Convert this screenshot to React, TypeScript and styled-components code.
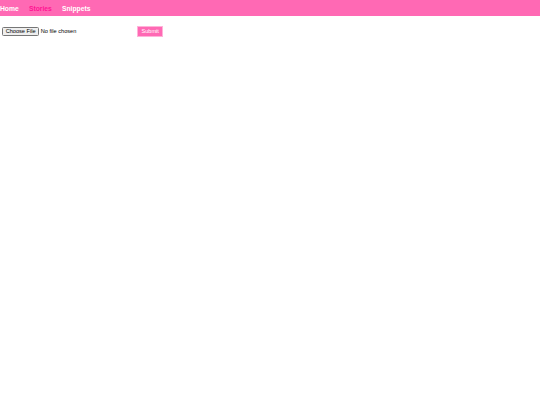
import styled, { createGlobalStyle } from "styled-components";

const GlobalStyle = createGlobalStyle`
  html, body {
    margin: 0;
    padding: 0;
    background: #fff;
    font-family: "Liberation Sans", Arial, sans-serif;
  }
`;

// the screenshot is a 1280px wide layout shown at 540px
const Page = styled.div`
  zoom: 0.421875;
`;

const NavBar = styled.nav`
  height: 38px;
  background-color: #ff69b4;
  display: flex;
  align-items: center;
`;

const NavLink = styled.a<{ $active?: boolean }>`
  font-size: 16px;
  font-weight: bold;
  text-decoration: none;
  margin-right: 24px;
  color: ${(p) => (p.$active ? "#ff1493" : "#ffffff")};
  cursor: pointer;
`;

const UploadForm = styled.form`
  display: flex;
  align-items: center;
  padding: 24px 5px 0;
`;

const FileInput = styled.input`
  font-family: "Liberation Sans", Arial, sans-serif;
  font-size: 13.33px;
  width: 320px;
`;

const SubmitButton = styled.button`
  font-family: "Liberation Sans", Arial, sans-serif;
  font-size: 13.33px;
  color: #fff;
  background-color: #ff69b4;
  border: 2px solid #ffb3d9;
  height: 25px;
  width: 62px;
  padding: 0;
  cursor: pointer;
`;

function App() {
  return (
    <Page>
      <GlobalStyle />
      <NavBar>
        <NavLink>Home</NavLink>
        <NavLink $active>Stories</NavLink>
        <NavLink>Snippets</NavLink>
      </NavBar>
      <UploadForm onSubmit={(e) => e.preventDefault()}>
        <FileInput type="file" />
        <SubmitButton type="submit">Submit</SubmitButton>
      </UploadForm>
    </Page>
  );
}

export default App;
